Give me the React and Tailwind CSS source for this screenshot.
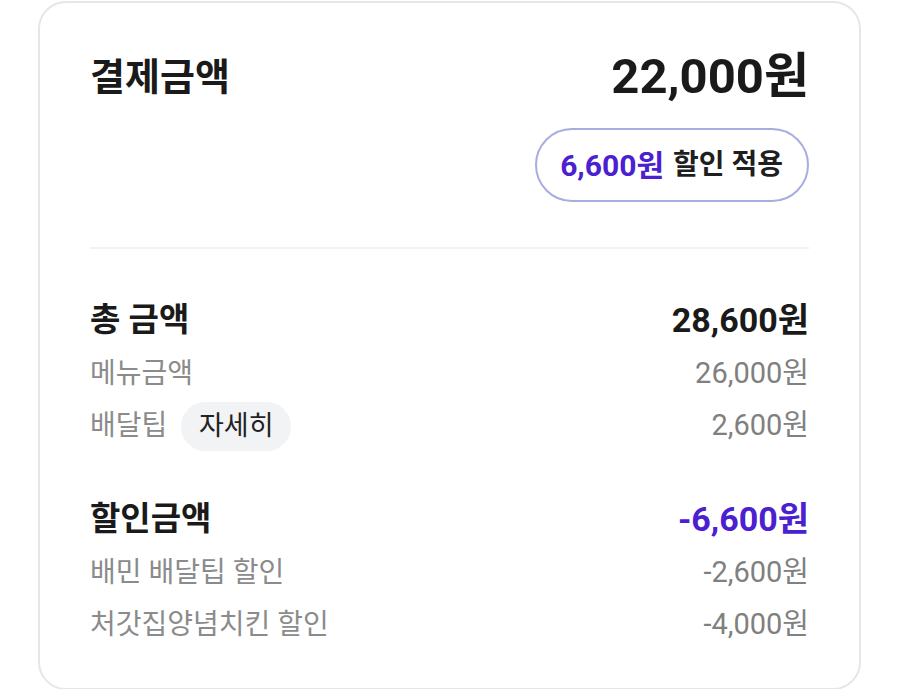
import React from 'react';

const FONT = { fontFamily: 'Roboto, "Noto Sans CJK KR", "Noto Sans", sans-serif' };

const subRows = {
    total: [
        { label: '메뉴금액', value: '26,000원' },
        { label: '배달팁', value: '2,600원', detail: true },
    ],
    discount: [
        { label: '배민 배달팁 할인', value: '-2,600원' },
        { label: '처갓집양념치킨 할인', value: '-4,000원' },
    ],
};

const SubRow = ({ label, value, detail }) => (
    <div className="flex items-center justify-between h-[52px]">
        <div className="flex items-center gap-[14px]">
            <span className="text-[28px] text-[#8b8b8b]">{label}</span>
            {detail && (
                <button className="h-[49px] w-[110px] rounded-full bg-[#f2f3f5] text-[27px] text-[#222] flex items-center justify-center">
                    자세히
                </button>
            )}
        </div>
        <span className="text-[29px] text-[#808080]">{value}</span>
    </div>
);

const App = () => {
    return (
        <div className="w-[900px] h-[689px] bg-white overflow-hidden pt-px" style={FONT}>
            <div className="ml-[38px] w-[823px] h-[689px] border-2 border-[#e6e6e6] rounded-[28px] bg-white px-[50px] pt-[44px]">
                <div className="flex items-center justify-between h-[60px]">
                    <h2 className="text-[38px] font-bold text-[#1a1a1a]">결제금액</h2>
                    <span className="text-[49px] font-bold text-[#1a1a1a]">22,000원</span>
                </div>

                <div className="flex justify-end mt-[21px]">
                    <button className="h-[74px] pl-[23px] pr-[24px] rounded-full border-2 border-[#a9acdf] flex items-center gap-[9px] font-bold">
                        <span className="text-[#4a20d0] text-[30px]">6,600원</span>
                        <span className="text-[#1f1f1f] text-[28px]">할인 적용</span>
                    </button>
                </div>

                <div className="h-[2px] bg-[#f2f2f2] mt-[45px]" />

                <div className="mt-[43px]">
                    <div className="flex items-center justify-between h-[56px]">
                        <span className="text-[33px] font-bold text-[#1a1a1a]">총 금액</span>
                        <span className="text-[34px] font-bold text-[#1a1a1a]">28,600원</span>
                    </div>
                    {subRows.total.map((r) => (
                        <SubRow key={r.label} {...r} />
                    ))}
                </div>

                <div className="mt-[39px]">
                    <div className="flex items-center justify-between h-[56px]">
                        <span className="text-[33px] font-bold text-[#1a1a1a]">할인금액</span>
                        <span className="text-[34px] font-bold text-[#4a20d0]">-6,600원</span>
                    </div>
                    {subRows.discount.map((r) => (
                        <SubRow key={r.label} {...r} />
                    ))}
                </div>
            </div>
        </div>
    );
};

export default App;
